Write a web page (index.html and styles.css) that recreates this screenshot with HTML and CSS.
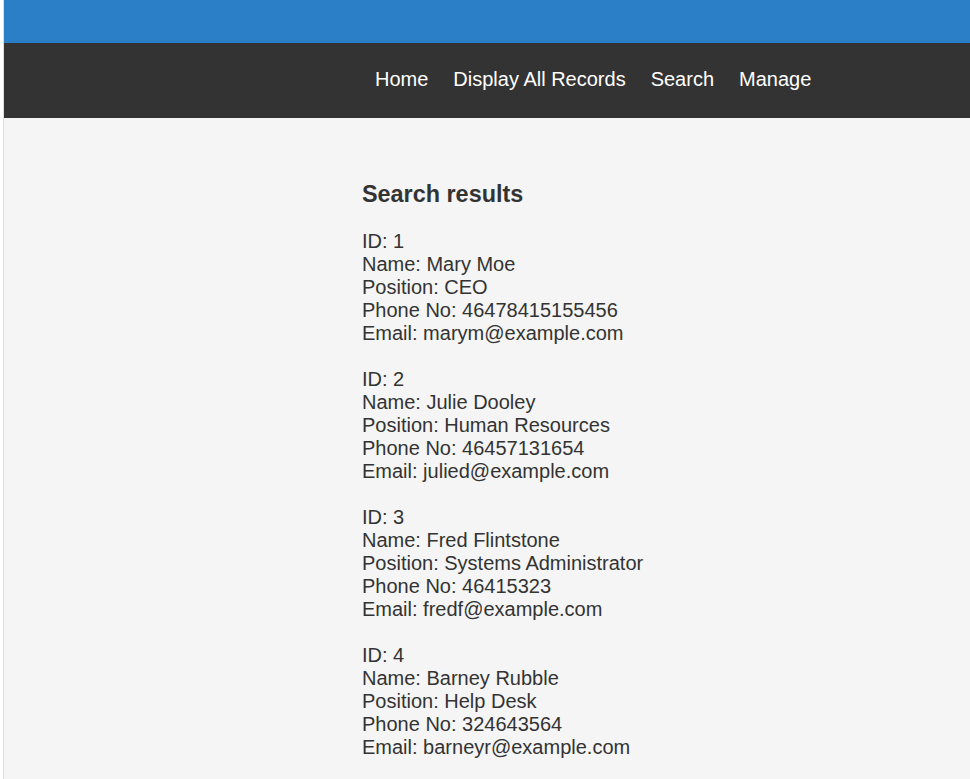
FILE: index.html
```html
<!DOCTYPE html>
<html>
<head>
<meta charset="utf-8">
<title>Search results</title>
<link rel="stylesheet" href="styles.css">
</head>
<body>
<div class="page">
  <header class="topbar"></header>
  <nav class="nav">
    <a href="#">Home</a>
    <a href="#">Display All Records</a>
    <a href="#">Search</a>
    <a href="#">Manage</a>
  </nav>
  <main class="content">
    <h2 class="title">Search results</h2>
    <div class="record">ID: 1<br>Name: Mary Moe<br>Position: CEO<br>Phone No: 46478415155456<br>Email: marym@example.com</div>
    <div class="record">ID: 2<br>Name: Julie Dooley<br>Position: Human Resources<br>Phone No: 46457131654<br>Email: julied@example.com</div>
    <div class="record">ID: 3<br>Name: Fred Flintstone<br>Position: Systems Administrator<br>Phone No: 46415323<br>Email: fredf@example.com</div>
    <div class="record">ID: 4<br>Name: Barney Rubble<br>Position: Help Desk<br>Phone No: 324643564<br>Email: barneyr@example.com</div>
  </main>
</div>
</body>
</html>
```
FILE: styles.css
```css
html, body {
  margin: 0;
  padding: 0;
  background: #ffffff;
}
body {
  font-family: "Liberation Sans", Arial, sans-serif;
  color: #333333;
}
.page {
  margin-left: 3px;
  border-left: 1px solid #dddddd;
  background: #f5f5f5;
  min-height: 779px;
}
.topbar {
  height: 43px;
  background: #2b7fc6;
}
.nav {
  height: 73px;
  padding-bottom: 2px;
  background: #333333;
  display: flex;
  align-items: center;
  gap: 25px;
  padding-left: 371px;
}
.nav a {
  color: #ffffff;
  text-decoration: none;
  font-size: 20px;
  line-height: 23px;
}
.content {
  padding: 63px 0 0 358px;
  font-size: 20px;
  line-height: 23px;
}
.title {
  font-size: 23.4px;
  font-weight: bold;
  line-height: 27px;
  margin: 0 0 22px 0;
}
.record {
  margin-bottom: 23px;
}
```
